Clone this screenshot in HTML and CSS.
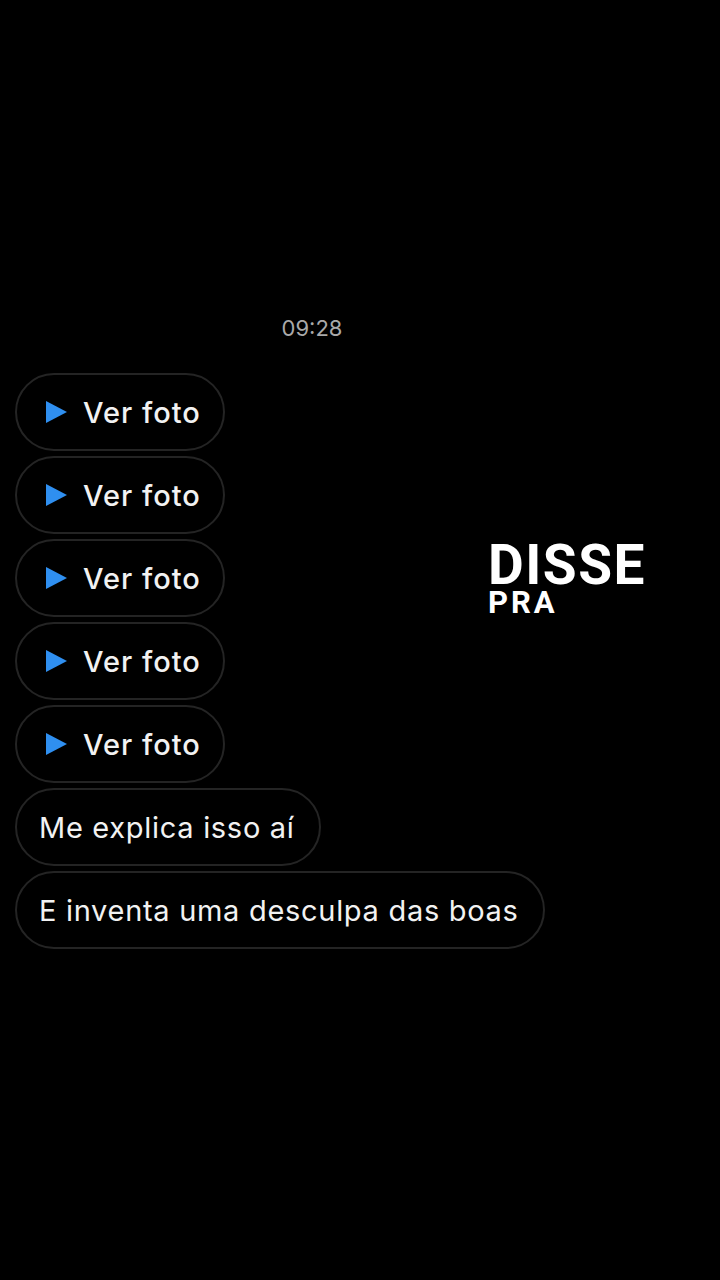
FILE: index.html
```html
<!DOCTYPE html>
<html lang="pt">
<head>
    <meta charset="UTF-8">
    <meta name="viewport" content="width=device-width, initial-scale=1.0">
    <title>Conversa</title>
    <link rel="stylesheet" href="styles.css">
</head>
<body>
    <div class="chat">
        <div class="time">09:28</div>
        <div class="messages">
            <div class="bubble photo"><span class="play"></span>Ver foto</div>
            <div class="bubble photo"><span class="play"></span>Ver foto</div>
            <div class="bubble photo"><span class="play"></span>Ver foto</div>
            <div class="bubble photo"><span class="play"></span>Ver foto</div>
            <div class="bubble photo"><span class="play"></span>Ver foto</div>
            <div class="bubble text">Me explica isso aí</div>
            <div class="bubble text">E inventa uma desculpa das boas</div>
        </div>
        <div class="caption">
            <div class="big">DISSE</div>
            <div class="small">PRA</div>
        </div>
    </div>
</body>
</html>
```

FILE: styles.css
```css
* {
    margin: 0;
    padding: 0;
    box-sizing: border-box;
}

html, body {
    height: 100%;
    background-color: #000;
    font-family: Inter, "Liberation Sans", sans-serif;
    color: #f2f2f2;
}

.chat {
    position: relative;
    padding-top: 314px;
    padding-left: 15px;
}

.time {
    width: 594px;
    text-align: center;
    font-size: 22px;
    color: #a9a9a9;
    line-height: 28px;
}

.messages {
    display: flex;
    flex-direction: column;
    align-items: flex-start;
    gap: 5px;
    margin-top: 31px;
}

.bubble {
    height: 78px;
    border: 2px solid #242424;
    border-radius: 40px;
    display: flex;
    align-items: center;
    font-size: 29px;
    letter-spacing: 0.7px;
}

.photo {
    width: 210px;
    padding-left: 29px;
    font-weight: 500;
    letter-spacing: 1px;
}

.play {
    width: 0;
    height: 0;
    border-top: 11px solid transparent;
    border-bottom: 11px solid transparent;
    border-left: 21px solid #2f8ff0;
    margin-right: 16px;
}

.text {
    padding: 0 24px 0 22px;
}

.caption {
    position: absolute;
    left: 488px;
    top: 540px;
    color: #fff;
    font-family: Roboto, "Liberation Sans", sans-serif;
    font-weight: 700;
}

.big {
    font-size: 55px;
    line-height: 50px;
    letter-spacing: 1.5px;
}

.small {
    font-size: 31px;
    line-height: 26px;
    letter-spacing: 3px;
}
```
